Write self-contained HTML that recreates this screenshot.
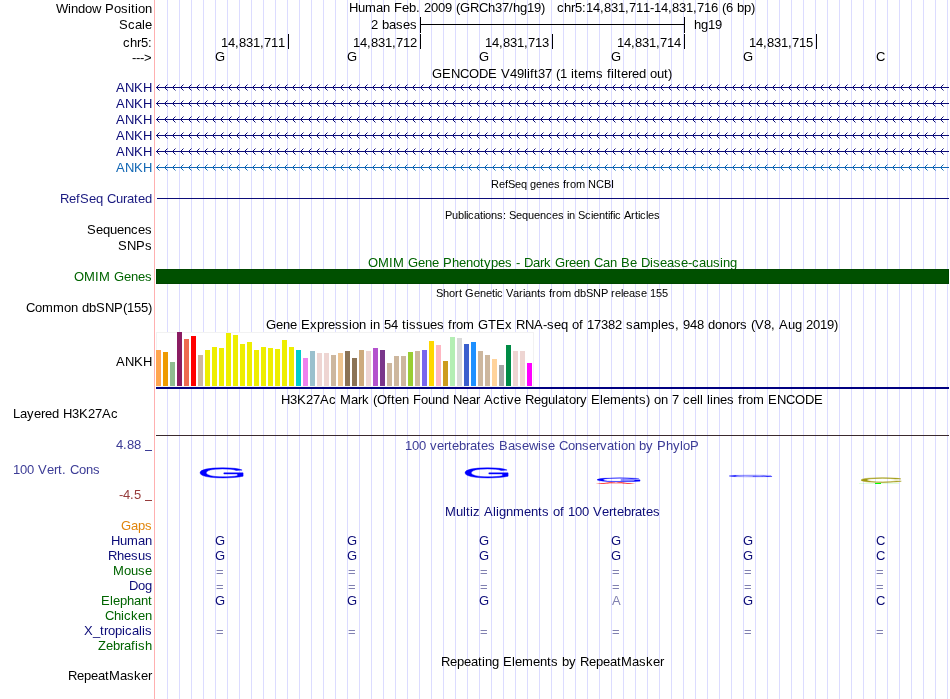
<!DOCTYPE html>
<html><head><meta charset="utf-8"><style>
html,body{margin:0;padding:0;background:#fff;width:950px;height:699px;overflow:hidden}
svg{display:block;will-change:transform}
text{font-family:"Liberation Sans", sans-serif;font-size:13px;white-space:pre}
.s{font-size:11px}
</style></head><body>
<svg width="950" height="699" viewBox="0 0 950 699">
<rect width="950" height="699" fill="#fff"/>

<g fill="#dcdcff" shape-rendering="crispEdges">
<rect x="167" y="0" width="1" height="699"/>
<rect x="179" y="0" width="1" height="699"/>
<rect x="191" y="0" width="1" height="699"/>
<rect x="203" y="0" width="1" height="699"/>
<rect x="215" y="0" width="1" height="699"/>
<rect x="227" y="0" width="1" height="699"/>
<rect x="239" y="0" width="1" height="699"/>
<rect x="251" y="0" width="1" height="699"/>
<rect x="263" y="0" width="1" height="699"/>
<rect x="275" y="0" width="1" height="699"/>
<rect x="287" y="0" width="1" height="699"/>
<rect x="299" y="0" width="1" height="699"/>
<rect x="311" y="0" width="1" height="699"/>
<rect x="323" y="0" width="1" height="699"/>
<rect x="335" y="0" width="1" height="699"/>
<rect x="347" y="0" width="1" height="699"/>
<rect x="359" y="0" width="1" height="699"/>
<rect x="371" y="0" width="1" height="699"/>
<rect x="383" y="0" width="1" height="699"/>
<rect x="395" y="0" width="1" height="699"/>
<rect x="407" y="0" width="1" height="699"/>
<rect x="419" y="0" width="1" height="699"/>
<rect x="431" y="0" width="1" height="699"/>
<rect x="443" y="0" width="1" height="699"/>
<rect x="455" y="0" width="1" height="699"/>
<rect x="467" y="0" width="1" height="699"/>
<rect x="479" y="0" width="1" height="699"/>
<rect x="491" y="0" width="1" height="699"/>
<rect x="503" y="0" width="1" height="699"/>
<rect x="515" y="0" width="1" height="699"/>
<rect x="527" y="0" width="1" height="699"/>
<rect x="539" y="0" width="1" height="699"/>
<rect x="551" y="0" width="1" height="699"/>
<rect x="563" y="0" width="1" height="699"/>
<rect x="575" y="0" width="1" height="699"/>
<rect x="587" y="0" width="1" height="699"/>
<rect x="599" y="0" width="1" height="699"/>
<rect x="611" y="0" width="1" height="699"/>
<rect x="623" y="0" width="1" height="699"/>
<rect x="635" y="0" width="1" height="699"/>
<rect x="647" y="0" width="1" height="699"/>
<rect x="659" y="0" width="1" height="699"/>
<rect x="671" y="0" width="1" height="699"/>
<rect x="683" y="0" width="1" height="699"/>
<rect x="695" y="0" width="1" height="699"/>
<rect x="707" y="0" width="1" height="699"/>
<rect x="719" y="0" width="1" height="699"/>
<rect x="731" y="0" width="1" height="699"/>
<rect x="743" y="0" width="1" height="699"/>
<rect x="755" y="0" width="1" height="699"/>
<rect x="767" y="0" width="1" height="699"/>
<rect x="779" y="0" width="1" height="699"/>
<rect x="791" y="0" width="1" height="699"/>
<rect x="803" y="0" width="1" height="699"/>
<rect x="815" y="0" width="1" height="699"/>
<rect x="827" y="0" width="1" height="699"/>
<rect x="839" y="0" width="1" height="699"/>
<rect x="851" y="0" width="1" height="699"/>
<rect x="863" y="0" width="1" height="699"/>
<rect x="875" y="0" width="1" height="699"/>
<rect x="887" y="0" width="1" height="699"/>
<rect x="899" y="0" width="1" height="699"/>
<rect x="911" y="0" width="1" height="699"/>
<rect x="923" y="0" width="1" height="699"/>
<rect x="935" y="0" width="1" height="699"/>
<rect x="947" y="0" width="1" height="699"/>
</g>
<rect x="154" y="0" width="1" height="699" fill="#ffb0b0" shape-rendering="crispEdges"/>
<text x="56 68 71 78 85 92 101 105 114 121 128 131 135 138 145" y="13" fill="#000">Window Position</text>
<text x="119 128 135 142 145" y="29" fill="#000">Scale</text>
<text x="123 130 137 141 148" y="47" fill="#000">chr5:</text>
<text x="132 136 140 144" y="62" fill="#000">---&gt;</text>
<text x="349 358 365 376 383 390 394 402 409 416 420 424 431 438 445 452 456 460 470 479 488 495 502 509 513 520 527 534 541" y="12" fill="#000">Human Feb. 2009 (GRCh37/hg19)</text>
<text x="557 564 571 575 582 586 593 600 604 611 618 625 629 636 643 650 654 661 668 672 679 686 693 697 704 711 718 722 726 733 737 744 751" y="12" fill="#000">chr5:14,831,711-14,831,716 (6 bp)</text>
<text x="371 378 382 389 396 403 410" y="29" fill="#000">2 bases</text>
<text x="694 701 708 715" y="29" fill="#000">hg19</text>
<g fill="#000" shape-rendering="crispEdges">
<rect x="420" y="17" width="1" height="16"/><rect x="684" y="17" width="1" height="16"/><rect x="420" y="24" width="265" height="1"/>
<rect x="288" y="34" width="1" height="15"/>
<rect x="420" y="34" width="1" height="15"/>
<rect x="552" y="34" width="1" height="15"/>
<rect x="684" y="34" width="1" height="15"/>
<rect x="816" y="34" width="1" height="15"/>
</g>
<text x="221 228 235 239 246 253 260 264 271 278" y="47" fill="#000">14,831,711</text>
<text x="353 360 367 371 378 385 392 396 403 410" y="47" fill="#000">14,831,712</text>
<text x="485 492 499 503 510 517 524 528 535 542" y="47" fill="#000">14,831,713</text>
<text x="617 624 631 635 642 649 656 660 667 674" y="47" fill="#000">14,831,714</text>
<text x="749 756 763 767 774 781 788 792 799 806" y="47" fill="#000">14,831,715</text>
<text x="215" y="61" fill="#000">G</text>
<text x="347" y="61" fill="#000">G</text>
<text x="479" y="61" fill="#000">G</text>
<text x="611" y="61" fill="#000">G</text>
<text x="743" y="61" fill="#000">G</text>
<text x="876" y="61" fill="#000">C</text>
<text x="432 442 451 460 469 479 488 497 501 510 517 524 527 530 534 538 545 552 556 560 567 571 574 578 585 596 603 607 611 614 617 621 628 632 639 646 650 657 664 668" y="78" fill="#000">GENCODE V49lift37 (1 items filtered out)</text>
<text x="116 125 134 143" y="92" fill="#0c0c78">ANKH</text>
<rect x="156" y="87" width="793" height="1" fill="#0c0c78" shape-rendering="crispEdges"/>
<path d="M159.5,84.5L156.5,87.5L159.5,90.5M167.5,84.5L164.5,87.5L167.5,90.5M175.5,84.5L172.5,87.5L175.5,90.5M183.5,84.5L180.5,87.5L183.5,90.5M191.5,84.5L188.5,87.5L191.5,90.5M199.5,84.5L196.5,87.5L199.5,90.5M207.5,84.5L204.5,87.5L207.5,90.5M215.5,84.5L212.5,87.5L215.5,90.5M223.5,84.5L220.5,87.5L223.5,90.5M231.5,84.5L228.5,87.5L231.5,90.5M239.5,84.5L236.5,87.5L239.5,90.5M247.5,84.5L244.5,87.5L247.5,90.5M255.5,84.5L252.5,87.5L255.5,90.5M263.5,84.5L260.5,87.5L263.5,90.5M271.5,84.5L268.5,87.5L271.5,90.5M279.5,84.5L276.5,87.5L279.5,90.5M287.5,84.5L284.5,87.5L287.5,90.5M295.5,84.5L292.5,87.5L295.5,90.5M303.5,84.5L300.5,87.5L303.5,90.5M311.5,84.5L308.5,87.5L311.5,90.5M319.5,84.5L316.5,87.5L319.5,90.5M327.5,84.5L324.5,87.5L327.5,90.5M335.5,84.5L332.5,87.5L335.5,90.5M343.5,84.5L340.5,87.5L343.5,90.5M351.5,84.5L348.5,87.5L351.5,90.5M359.5,84.5L356.5,87.5L359.5,90.5M367.5,84.5L364.5,87.5L367.5,90.5M375.5,84.5L372.5,87.5L375.5,90.5M383.5,84.5L380.5,87.5L383.5,90.5M391.5,84.5L388.5,87.5L391.5,90.5M399.5,84.5L396.5,87.5L399.5,90.5M407.5,84.5L404.5,87.5L407.5,90.5M415.5,84.5L412.5,87.5L415.5,90.5M423.5,84.5L420.5,87.5L423.5,90.5M431.5,84.5L428.5,87.5L431.5,90.5M439.5,84.5L436.5,87.5L439.5,90.5M447.5,84.5L444.5,87.5L447.5,90.5M455.5,84.5L452.5,87.5L455.5,90.5M463.5,84.5L460.5,87.5L463.5,90.5M471.5,84.5L468.5,87.5L471.5,90.5M479.5,84.5L476.5,87.5L479.5,90.5M487.5,84.5L484.5,87.5L487.5,90.5M495.5,84.5L492.5,87.5L495.5,90.5M503.5,84.5L500.5,87.5L503.5,90.5M511.5,84.5L508.5,87.5L511.5,90.5M519.5,84.5L516.5,87.5L519.5,90.5M527.5,84.5L524.5,87.5L527.5,90.5M535.5,84.5L532.5,87.5L535.5,90.5M543.5,84.5L540.5,87.5L543.5,90.5M551.5,84.5L548.5,87.5L551.5,90.5M559.5,84.5L556.5,87.5L559.5,90.5M567.5,84.5L564.5,87.5L567.5,90.5M575.5,84.5L572.5,87.5L575.5,90.5M583.5,84.5L580.5,87.5L583.5,90.5M591.5,84.5L588.5,87.5L591.5,90.5M599.5,84.5L596.5,87.5L599.5,90.5M607.5,84.5L604.5,87.5L607.5,90.5M615.5,84.5L612.5,87.5L615.5,90.5M623.5,84.5L620.5,87.5L623.5,90.5M631.5,84.5L628.5,87.5L631.5,90.5M639.5,84.5L636.5,87.5L639.5,90.5M647.5,84.5L644.5,87.5L647.5,90.5M655.5,84.5L652.5,87.5L655.5,90.5M663.5,84.5L660.5,87.5L663.5,90.5M671.5,84.5L668.5,87.5L671.5,90.5M679.5,84.5L676.5,87.5L679.5,90.5M687.5,84.5L684.5,87.5L687.5,90.5M695.5,84.5L692.5,87.5L695.5,90.5M703.5,84.5L700.5,87.5L703.5,90.5M711.5,84.5L708.5,87.5L711.5,90.5M719.5,84.5L716.5,87.5L719.5,90.5M727.5,84.5L724.5,87.5L727.5,90.5M735.5,84.5L732.5,87.5L735.5,90.5M743.5,84.5L740.5,87.5L743.5,90.5M751.5,84.5L748.5,87.5L751.5,90.5M759.5,84.5L756.5,87.5L759.5,90.5M767.5,84.5L764.5,87.5L767.5,90.5M775.5,84.5L772.5,87.5L775.5,90.5M783.5,84.5L780.5,87.5L783.5,90.5M791.5,84.5L788.5,87.5L791.5,90.5M799.5,84.5L796.5,87.5L799.5,90.5M807.5,84.5L804.5,87.5L807.5,90.5M815.5,84.5L812.5,87.5L815.5,90.5M823.5,84.5L820.5,87.5L823.5,90.5M831.5,84.5L828.5,87.5L831.5,90.5M839.5,84.5L836.5,87.5L839.5,90.5M847.5,84.5L844.5,87.5L847.5,90.5M855.5,84.5L852.5,87.5L855.5,90.5M863.5,84.5L860.5,87.5L863.5,90.5M871.5,84.5L868.5,87.5L871.5,90.5M879.5,84.5L876.5,87.5L879.5,90.5M887.5,84.5L884.5,87.5L887.5,90.5M895.5,84.5L892.5,87.5L895.5,90.5M903.5,84.5L900.5,87.5L903.5,90.5M911.5,84.5L908.5,87.5L911.5,90.5M919.5,84.5L916.5,87.5L919.5,90.5M927.5,84.5L924.5,87.5L927.5,90.5M935.5,84.5L932.5,87.5L935.5,90.5M943.5,84.5L940.5,87.5L943.5,90.5" stroke="#0c0c78" stroke-width="1" fill="none"/>
<text x="116 125 134 143" y="108" fill="#0c0c78">ANKH</text>
<rect x="156" y="103" width="793" height="1" fill="#0c0c78" shape-rendering="crispEdges"/>
<path d="M159.5,100.5L156.5,103.5L159.5,106.5M167.5,100.5L164.5,103.5L167.5,106.5M175.5,100.5L172.5,103.5L175.5,106.5M183.5,100.5L180.5,103.5L183.5,106.5M191.5,100.5L188.5,103.5L191.5,106.5M199.5,100.5L196.5,103.5L199.5,106.5M207.5,100.5L204.5,103.5L207.5,106.5M215.5,100.5L212.5,103.5L215.5,106.5M223.5,100.5L220.5,103.5L223.5,106.5M231.5,100.5L228.5,103.5L231.5,106.5M239.5,100.5L236.5,103.5L239.5,106.5M247.5,100.5L244.5,103.5L247.5,106.5M255.5,100.5L252.5,103.5L255.5,106.5M263.5,100.5L260.5,103.5L263.5,106.5M271.5,100.5L268.5,103.5L271.5,106.5M279.5,100.5L276.5,103.5L279.5,106.5M287.5,100.5L284.5,103.5L287.5,106.5M295.5,100.5L292.5,103.5L295.5,106.5M303.5,100.5L300.5,103.5L303.5,106.5M311.5,100.5L308.5,103.5L311.5,106.5M319.5,100.5L316.5,103.5L319.5,106.5M327.5,100.5L324.5,103.5L327.5,106.5M335.5,100.5L332.5,103.5L335.5,106.5M343.5,100.5L340.5,103.5L343.5,106.5M351.5,100.5L348.5,103.5L351.5,106.5M359.5,100.5L356.5,103.5L359.5,106.5M367.5,100.5L364.5,103.5L367.5,106.5M375.5,100.5L372.5,103.5L375.5,106.5M383.5,100.5L380.5,103.5L383.5,106.5M391.5,100.5L388.5,103.5L391.5,106.5M399.5,100.5L396.5,103.5L399.5,106.5M407.5,100.5L404.5,103.5L407.5,106.5M415.5,100.5L412.5,103.5L415.5,106.5M423.5,100.5L420.5,103.5L423.5,106.5M431.5,100.5L428.5,103.5L431.5,106.5M439.5,100.5L436.5,103.5L439.5,106.5M447.5,100.5L444.5,103.5L447.5,106.5M455.5,100.5L452.5,103.5L455.5,106.5M463.5,100.5L460.5,103.5L463.5,106.5M471.5,100.5L468.5,103.5L471.5,106.5M479.5,100.5L476.5,103.5L479.5,106.5M487.5,100.5L484.5,103.5L487.5,106.5M495.5,100.5L492.5,103.5L495.5,106.5M503.5,100.5L500.5,103.5L503.5,106.5M511.5,100.5L508.5,103.5L511.5,106.5M519.5,100.5L516.5,103.5L519.5,106.5M527.5,100.5L524.5,103.5L527.5,106.5M535.5,100.5L532.5,103.5L535.5,106.5M543.5,100.5L540.5,103.5L543.5,106.5M551.5,100.5L548.5,103.5L551.5,106.5M559.5,100.5L556.5,103.5L559.5,106.5M567.5,100.5L564.5,103.5L567.5,106.5M575.5,100.5L572.5,103.5L575.5,106.5M583.5,100.5L580.5,103.5L583.5,106.5M591.5,100.5L588.5,103.5L591.5,106.5M599.5,100.5L596.5,103.5L599.5,106.5M607.5,100.5L604.5,103.5L607.5,106.5M615.5,100.5L612.5,103.5L615.5,106.5M623.5,100.5L620.5,103.5L623.5,106.5M631.5,100.5L628.5,103.5L631.5,106.5M639.5,100.5L636.5,103.5L639.5,106.5M647.5,100.5L644.5,103.5L647.5,106.5M655.5,100.5L652.5,103.5L655.5,106.5M663.5,100.5L660.5,103.5L663.5,106.5M671.5,100.5L668.5,103.5L671.5,106.5M679.5,100.5L676.5,103.5L679.5,106.5M687.5,100.5L684.5,103.5L687.5,106.5M695.5,100.5L692.5,103.5L695.5,106.5M703.5,100.5L700.5,103.5L703.5,106.5M711.5,100.5L708.5,103.5L711.5,106.5M719.5,100.5L716.5,103.5L719.5,106.5M727.5,100.5L724.5,103.5L727.5,106.5M735.5,100.5L732.5,103.5L735.5,106.5M743.5,100.5L740.5,103.5L743.5,106.5M751.5,100.5L748.5,103.5L751.5,106.5M759.5,100.5L756.5,103.5L759.5,106.5M767.5,100.5L764.5,103.5L767.5,106.5M775.5,100.5L772.5,103.5L775.5,106.5M783.5,100.5L780.5,103.5L783.5,106.5M791.5,100.5L788.5,103.5L791.5,106.5M799.5,100.5L796.5,103.5L799.5,106.5M807.5,100.5L804.5,103.5L807.5,106.5M815.5,100.5L812.5,103.5L815.5,106.5M823.5,100.5L820.5,103.5L823.5,106.5M831.5,100.5L828.5,103.5L831.5,106.5M839.5,100.5L836.5,103.5L839.5,106.5M847.5,100.5L844.5,103.5L847.5,106.5M855.5,100.5L852.5,103.5L855.5,106.5M863.5,100.5L860.5,103.5L863.5,106.5M871.5,100.5L868.5,103.5L871.5,106.5M879.5,100.5L876.5,103.5L879.5,106.5M887.5,100.5L884.5,103.5L887.5,106.5M895.5,100.5L892.5,103.5L895.5,106.5M903.5,100.5L900.5,103.5L903.5,106.5M911.5,100.5L908.5,103.5L911.5,106.5M919.5,100.5L916.5,103.5L919.5,106.5M927.5,100.5L924.5,103.5L927.5,106.5M935.5,100.5L932.5,103.5L935.5,106.5M943.5,100.5L940.5,103.5L943.5,106.5" stroke="#0c0c78" stroke-width="1" fill="none"/>
<text x="116 125 134 143" y="124" fill="#0c0c78">ANKH</text>
<rect x="156" y="119" width="793" height="1" fill="#0c0c78" shape-rendering="crispEdges"/>
<path d="M159.5,116.5L156.5,119.5L159.5,122.5M167.5,116.5L164.5,119.5L167.5,122.5M175.5,116.5L172.5,119.5L175.5,122.5M183.5,116.5L180.5,119.5L183.5,122.5M191.5,116.5L188.5,119.5L191.5,122.5M199.5,116.5L196.5,119.5L199.5,122.5M207.5,116.5L204.5,119.5L207.5,122.5M215.5,116.5L212.5,119.5L215.5,122.5M223.5,116.5L220.5,119.5L223.5,122.5M231.5,116.5L228.5,119.5L231.5,122.5M239.5,116.5L236.5,119.5L239.5,122.5M247.5,116.5L244.5,119.5L247.5,122.5M255.5,116.5L252.5,119.5L255.5,122.5M263.5,116.5L260.5,119.5L263.5,122.5M271.5,116.5L268.5,119.5L271.5,122.5M279.5,116.5L276.5,119.5L279.5,122.5M287.5,116.5L284.5,119.5L287.5,122.5M295.5,116.5L292.5,119.5L295.5,122.5M303.5,116.5L300.5,119.5L303.5,122.5M311.5,116.5L308.5,119.5L311.5,122.5M319.5,116.5L316.5,119.5L319.5,122.5M327.5,116.5L324.5,119.5L327.5,122.5M335.5,116.5L332.5,119.5L335.5,122.5M343.5,116.5L340.5,119.5L343.5,122.5M351.5,116.5L348.5,119.5L351.5,122.5M359.5,116.5L356.5,119.5L359.5,122.5M367.5,116.5L364.5,119.5L367.5,122.5M375.5,116.5L372.5,119.5L375.5,122.5M383.5,116.5L380.5,119.5L383.5,122.5M391.5,116.5L388.5,119.5L391.5,122.5M399.5,116.5L396.5,119.5L399.5,122.5M407.5,116.5L404.5,119.5L407.5,122.5M415.5,116.5L412.5,119.5L415.5,122.5M423.5,116.5L420.5,119.5L423.5,122.5M431.5,116.5L428.5,119.5L431.5,122.5M439.5,116.5L436.5,119.5L439.5,122.5M447.5,116.5L444.5,119.5L447.5,122.5M455.5,116.5L452.5,119.5L455.5,122.5M463.5,116.5L460.5,119.5L463.5,122.5M471.5,116.5L468.5,119.5L471.5,122.5M479.5,116.5L476.5,119.5L479.5,122.5M487.5,116.5L484.5,119.5L487.5,122.5M495.5,116.5L492.5,119.5L495.5,122.5M503.5,116.5L500.5,119.5L503.5,122.5M511.5,116.5L508.5,119.5L511.5,122.5M519.5,116.5L516.5,119.5L519.5,122.5M527.5,116.5L524.5,119.5L527.5,122.5M535.5,116.5L532.5,119.5L535.5,122.5M543.5,116.5L540.5,119.5L543.5,122.5M551.5,116.5L548.5,119.5L551.5,122.5M559.5,116.5L556.5,119.5L559.5,122.5M567.5,116.5L564.5,119.5L567.5,122.5M575.5,116.5L572.5,119.5L575.5,122.5M583.5,116.5L580.5,119.5L583.5,122.5M591.5,116.5L588.5,119.5L591.5,122.5M599.5,116.5L596.5,119.5L599.5,122.5M607.5,116.5L604.5,119.5L607.5,122.5M615.5,116.5L612.5,119.5L615.5,122.5M623.5,116.5L620.5,119.5L623.5,122.5M631.5,116.5L628.5,119.5L631.5,122.5M639.5,116.5L636.5,119.5L639.5,122.5M647.5,116.5L644.5,119.5L647.5,122.5M655.5,116.5L652.5,119.5L655.5,122.5M663.5,116.5L660.5,119.5L663.5,122.5M671.5,116.5L668.5,119.5L671.5,122.5M679.5,116.5L676.5,119.5L679.5,122.5M687.5,116.5L684.5,119.5L687.5,122.5M695.5,116.5L692.5,119.5L695.5,122.5M703.5,116.5L700.5,119.5L703.5,122.5M711.5,116.5L708.5,119.5L711.5,122.5M719.5,116.5L716.5,119.5L719.5,122.5M727.5,116.5L724.5,119.5L727.5,122.5M735.5,116.5L732.5,119.5L735.5,122.5M743.5,116.5L740.5,119.5L743.5,122.5M751.5,116.5L748.5,119.5L751.5,122.5M759.5,116.5L756.5,119.5L759.5,122.5M767.5,116.5L764.5,119.5L767.5,122.5M775.5,116.5L772.5,119.5L775.5,122.5M783.5,116.5L780.5,119.5L783.5,122.5M791.5,116.5L788.5,119.5L791.5,122.5M799.5,116.5L796.5,119.5L799.5,122.5M807.5,116.5L804.5,119.5L807.5,122.5M815.5,116.5L812.5,119.5L815.5,122.5M823.5,116.5L820.5,119.5L823.5,122.5M831.5,116.5L828.5,119.5L831.5,122.5M839.5,116.5L836.5,119.5L839.5,122.5M847.5,116.5L844.5,119.5L847.5,122.5M855.5,116.5L852.5,119.5L855.5,122.5M863.5,116.5L860.5,119.5L863.5,122.5M871.5,116.5L868.5,119.5L871.5,122.5M879.5,116.5L876.5,119.5L879.5,122.5M887.5,116.5L884.5,119.5L887.5,122.5M895.5,116.5L892.5,119.5L895.5,122.5M903.5,116.5L900.5,119.5L903.5,122.5M911.5,116.5L908.5,119.5L911.5,122.5M919.5,116.5L916.5,119.5L919.5,122.5M927.5,116.5L924.5,119.5L927.5,122.5M935.5,116.5L932.5,119.5L935.5,122.5M943.5,116.5L940.5,119.5L943.5,122.5" stroke="#0c0c78" stroke-width="1" fill="none"/>
<text x="116 125 134 143" y="140" fill="#0c0c78">ANKH</text>
<rect x="156" y="135" width="793" height="1" fill="#0c0c78" shape-rendering="crispEdges"/>
<path d="M159.5,132.5L156.5,135.5L159.5,138.5M167.5,132.5L164.5,135.5L167.5,138.5M175.5,132.5L172.5,135.5L175.5,138.5M183.5,132.5L180.5,135.5L183.5,138.5M191.5,132.5L188.5,135.5L191.5,138.5M199.5,132.5L196.5,135.5L199.5,138.5M207.5,132.5L204.5,135.5L207.5,138.5M215.5,132.5L212.5,135.5L215.5,138.5M223.5,132.5L220.5,135.5L223.5,138.5M231.5,132.5L228.5,135.5L231.5,138.5M239.5,132.5L236.5,135.5L239.5,138.5M247.5,132.5L244.5,135.5L247.5,138.5M255.5,132.5L252.5,135.5L255.5,138.5M263.5,132.5L260.5,135.5L263.5,138.5M271.5,132.5L268.5,135.5L271.5,138.5M279.5,132.5L276.5,135.5L279.5,138.5M287.5,132.5L284.5,135.5L287.5,138.5M295.5,132.5L292.5,135.5L295.5,138.5M303.5,132.5L300.5,135.5L303.5,138.5M311.5,132.5L308.5,135.5L311.5,138.5M319.5,132.5L316.5,135.5L319.5,138.5M327.5,132.5L324.5,135.5L327.5,138.5M335.5,132.5L332.5,135.5L335.5,138.5M343.5,132.5L340.5,135.5L343.5,138.5M351.5,132.5L348.5,135.5L351.5,138.5M359.5,132.5L356.5,135.5L359.5,138.5M367.5,132.5L364.5,135.5L367.5,138.5M375.5,132.5L372.5,135.5L375.5,138.5M383.5,132.5L380.5,135.5L383.5,138.5M391.5,132.5L388.5,135.5L391.5,138.5M399.5,132.5L396.5,135.5L399.5,138.5M407.5,132.5L404.5,135.5L407.5,138.5M415.5,132.5L412.5,135.5L415.5,138.5M423.5,132.5L420.5,135.5L423.5,138.5M431.5,132.5L428.5,135.5L431.5,138.5M439.5,132.5L436.5,135.5L439.5,138.5M447.5,132.5L444.5,135.5L447.5,138.5M455.5,132.5L452.5,135.5L455.5,138.5M463.5,132.5L460.5,135.5L463.5,138.5M471.5,132.5L468.5,135.5L471.5,138.5M479.5,132.5L476.5,135.5L479.5,138.5M487.5,132.5L484.5,135.5L487.5,138.5M495.5,132.5L492.5,135.5L495.5,138.5M503.5,132.5L500.5,135.5L503.5,138.5M511.5,132.5L508.5,135.5L511.5,138.5M519.5,132.5L516.5,135.5L519.5,138.5M527.5,132.5L524.5,135.5L527.5,138.5M535.5,132.5L532.5,135.5L535.5,138.5M543.5,132.5L540.5,135.5L543.5,138.5M551.5,132.5L548.5,135.5L551.5,138.5M559.5,132.5L556.5,135.5L559.5,138.5M567.5,132.5L564.5,135.5L567.5,138.5M575.5,132.5L572.5,135.5L575.5,138.5M583.5,132.5L580.5,135.5L583.5,138.5M591.5,132.5L588.5,135.5L591.5,138.5M599.5,132.5L596.5,135.5L599.5,138.5M607.5,132.5L604.5,135.5L607.5,138.5M615.5,132.5L612.5,135.5L615.5,138.5M623.5,132.5L620.5,135.5L623.5,138.5M631.5,132.5L628.5,135.5L631.5,138.5M639.5,132.5L636.5,135.5L639.5,138.5M647.5,132.5L644.5,135.5L647.5,138.5M655.5,132.5L652.5,135.5L655.5,138.5M663.5,132.5L660.5,135.5L663.5,138.5M671.5,132.5L668.5,135.5L671.5,138.5M679.5,132.5L676.5,135.5L679.5,138.5M687.5,132.5L684.5,135.5L687.5,138.5M695.5,132.5L692.5,135.5L695.5,138.5M703.5,132.5L700.5,135.5L703.5,138.5M711.5,132.5L708.5,135.5L711.5,138.5M719.5,132.5L716.5,135.5L719.5,138.5M727.5,132.5L724.5,135.5L727.5,138.5M735.5,132.5L732.5,135.5L735.5,138.5M743.5,132.5L740.5,135.5L743.5,138.5M751.5,132.5L748.5,135.5L751.5,138.5M759.5,132.5L756.5,135.5L759.5,138.5M767.5,132.5L764.5,135.5L767.5,138.5M775.5,132.5L772.5,135.5L775.5,138.5M783.5,132.5L780.5,135.5L783.5,138.5M791.5,132.5L788.5,135.5L791.5,138.5M799.5,132.5L796.5,135.5L799.5,138.5M807.5,132.5L804.5,135.5L807.5,138.5M815.5,132.5L812.5,135.5L815.5,138.5M823.5,132.5L820.5,135.5L823.5,138.5M831.5,132.5L828.5,135.5L831.5,138.5M839.5,132.5L836.5,135.5L839.5,138.5M847.5,132.5L844.5,135.5L847.5,138.5M855.5,132.5L852.5,135.5L855.5,138.5M863.5,132.5L860.5,135.5L863.5,138.5M871.5,132.5L868.5,135.5L871.5,138.5M879.5,132.5L876.5,135.5L879.5,138.5M887.5,132.5L884.5,135.5L887.5,138.5M895.5,132.5L892.5,135.5L895.5,138.5M903.5,132.5L900.5,135.5L903.5,138.5M911.5,132.5L908.5,135.5L911.5,138.5M919.5,132.5L916.5,135.5L919.5,138.5M927.5,132.5L924.5,135.5L927.5,138.5M935.5,132.5L932.5,135.5L935.5,138.5M943.5,132.5L940.5,135.5L943.5,138.5" stroke="#0c0c78" stroke-width="1" fill="none"/>
<text x="116 125 134 143" y="156" fill="#0c0c78">ANKH</text>
<rect x="156" y="151" width="793" height="1" fill="#0c0c78" shape-rendering="crispEdges"/>
<path d="M159.5,148.5L156.5,151.5L159.5,154.5M167.5,148.5L164.5,151.5L167.5,154.5M175.5,148.5L172.5,151.5L175.5,154.5M183.5,148.5L180.5,151.5L183.5,154.5M191.5,148.5L188.5,151.5L191.5,154.5M199.5,148.5L196.5,151.5L199.5,154.5M207.5,148.5L204.5,151.5L207.5,154.5M215.5,148.5L212.5,151.5L215.5,154.5M223.5,148.5L220.5,151.5L223.5,154.5M231.5,148.5L228.5,151.5L231.5,154.5M239.5,148.5L236.5,151.5L239.5,154.5M247.5,148.5L244.5,151.5L247.5,154.5M255.5,148.5L252.5,151.5L255.5,154.5M263.5,148.5L260.5,151.5L263.5,154.5M271.5,148.5L268.5,151.5L271.5,154.5M279.5,148.5L276.5,151.5L279.5,154.5M287.5,148.5L284.5,151.5L287.5,154.5M295.5,148.5L292.5,151.5L295.5,154.5M303.5,148.5L300.5,151.5L303.5,154.5M311.5,148.5L308.5,151.5L311.5,154.5M319.5,148.5L316.5,151.5L319.5,154.5M327.5,148.5L324.5,151.5L327.5,154.5M335.5,148.5L332.5,151.5L335.5,154.5M343.5,148.5L340.5,151.5L343.5,154.5M351.5,148.5L348.5,151.5L351.5,154.5M359.5,148.5L356.5,151.5L359.5,154.5M367.5,148.5L364.5,151.5L367.5,154.5M375.5,148.5L372.5,151.5L375.5,154.5M383.5,148.5L380.5,151.5L383.5,154.5M391.5,148.5L388.5,151.5L391.5,154.5M399.5,148.5L396.5,151.5L399.5,154.5M407.5,148.5L404.5,151.5L407.5,154.5M415.5,148.5L412.5,151.5L415.5,154.5M423.5,148.5L420.5,151.5L423.5,154.5M431.5,148.5L428.5,151.5L431.5,154.5M439.5,148.5L436.5,151.5L439.5,154.5M447.5,148.5L444.5,151.5L447.5,154.5M455.5,148.5L452.5,151.5L455.5,154.5M463.5,148.5L460.5,151.5L463.5,154.5M471.5,148.5L468.5,151.5L471.5,154.5M479.5,148.5L476.5,151.5L479.5,154.5M487.5,148.5L484.5,151.5L487.5,154.5M495.5,148.5L492.5,151.5L495.5,154.5M503.5,148.5L500.5,151.5L503.5,154.5M511.5,148.5L508.5,151.5L511.5,154.5M519.5,148.5L516.5,151.5L519.5,154.5M527.5,148.5L524.5,151.5L527.5,154.5M535.5,148.5L532.5,151.5L535.5,154.5M543.5,148.5L540.5,151.5L543.5,154.5M551.5,148.5L548.5,151.5L551.5,154.5M559.5,148.5L556.5,151.5L559.5,154.5M567.5,148.5L564.5,151.5L567.5,154.5M575.5,148.5L572.5,151.5L575.5,154.5M583.5,148.5L580.5,151.5L583.5,154.5M591.5,148.5L588.5,151.5L591.5,154.5M599.5,148.5L596.5,151.5L599.5,154.5M607.5,148.5L604.5,151.5L607.5,154.5M615.5,148.5L612.5,151.5L615.5,154.5M623.5,148.5L620.5,151.5L623.5,154.5M631.5,148.5L628.5,151.5L631.5,154.5M639.5,148.5L636.5,151.5L639.5,154.5M647.5,148.5L644.5,151.5L647.5,154.5M655.5,148.5L652.5,151.5L655.5,154.5M663.5,148.5L660.5,151.5L663.5,154.5M671.5,148.5L668.5,151.5L671.5,154.5M679.5,148.5L676.5,151.5L679.5,154.5M687.5,148.5L684.5,151.5L687.5,154.5M695.5,148.5L692.5,151.5L695.5,154.5M703.5,148.5L700.5,151.5L703.5,154.5M711.5,148.5L708.5,151.5L711.5,154.5M719.5,148.5L716.5,151.5L719.5,154.5M727.5,148.5L724.5,151.5L727.5,154.5M735.5,148.5L732.5,151.5L735.5,154.5M743.5,148.5L740.5,151.5L743.5,154.5M751.5,148.5L748.5,151.5L751.5,154.5M759.5,148.5L756.5,151.5L759.5,154.5M767.5,148.5L764.5,151.5L767.5,154.5M775.5,148.5L772.5,151.5L775.5,154.5M783.5,148.5L780.5,151.5L783.5,154.5M791.5,148.5L788.5,151.5L791.5,154.5M799.5,148.5L796.5,151.5L799.5,154.5M807.5,148.5L804.5,151.5L807.5,154.5M815.5,148.5L812.5,151.5L815.5,154.5M823.5,148.5L820.5,151.5L823.5,154.5M831.5,148.5L828.5,151.5L831.5,154.5M839.5,148.5L836.5,151.5L839.5,154.5M847.5,148.5L844.5,151.5L847.5,154.5M855.5,148.5L852.5,151.5L855.5,154.5M863.5,148.5L860.5,151.5L863.5,154.5M871.5,148.5L868.5,151.5L871.5,154.5M879.5,148.5L876.5,151.5L879.5,154.5M887.5,148.5L884.5,151.5L887.5,154.5M895.5,148.5L892.5,151.5L895.5,154.5M903.5,148.5L900.5,151.5L903.5,154.5M911.5,148.5L908.5,151.5L911.5,154.5M919.5,148.5L916.5,151.5L919.5,154.5M927.5,148.5L924.5,151.5L927.5,154.5M935.5,148.5L932.5,151.5L935.5,154.5M943.5,148.5L940.5,151.5L943.5,154.5" stroke="#0c0c78" stroke-width="1" fill="none"/>
<text x="116 125 134 143" y="172" fill="#1066b4">ANKH</text>
<rect x="156" y="167" width="793" height="1" fill="#1066b4" shape-rendering="crispEdges"/>
<path d="M159.5,164.5L156.5,167.5L159.5,170.5M167.5,164.5L164.5,167.5L167.5,170.5M175.5,164.5L172.5,167.5L175.5,170.5M183.5,164.5L180.5,167.5L183.5,170.5M191.5,164.5L188.5,167.5L191.5,170.5M199.5,164.5L196.5,167.5L199.5,170.5M207.5,164.5L204.5,167.5L207.5,170.5M215.5,164.5L212.5,167.5L215.5,170.5M223.5,164.5L220.5,167.5L223.5,170.5M231.5,164.5L228.5,167.5L231.5,170.5M239.5,164.5L236.5,167.5L239.5,170.5M247.5,164.5L244.5,167.5L247.5,170.5M255.5,164.5L252.5,167.5L255.5,170.5M263.5,164.5L260.5,167.5L263.5,170.5M271.5,164.5L268.5,167.5L271.5,170.5M279.5,164.5L276.5,167.5L279.5,170.5M287.5,164.5L284.5,167.5L287.5,170.5M295.5,164.5L292.5,167.5L295.5,170.5M303.5,164.5L300.5,167.5L303.5,170.5M311.5,164.5L308.5,167.5L311.5,170.5M319.5,164.5L316.5,167.5L319.5,170.5M327.5,164.5L324.5,167.5L327.5,170.5M335.5,164.5L332.5,167.5L335.5,170.5M343.5,164.5L340.5,167.5L343.5,170.5M351.5,164.5L348.5,167.5L351.5,170.5M359.5,164.5L356.5,167.5L359.5,170.5M367.5,164.5L364.5,167.5L367.5,170.5M375.5,164.5L372.5,167.5L375.5,170.5M383.5,164.5L380.5,167.5L383.5,170.5M391.5,164.5L388.5,167.5L391.5,170.5M399.5,164.5L396.5,167.5L399.5,170.5M407.5,164.5L404.5,167.5L407.5,170.5M415.5,164.5L412.5,167.5L415.5,170.5M423.5,164.5L420.5,167.5L423.5,170.5M431.5,164.5L428.5,167.5L431.5,170.5M439.5,164.5L436.5,167.5L439.5,170.5M447.5,164.5L444.5,167.5L447.5,170.5M455.5,164.5L452.5,167.5L455.5,170.5M463.5,164.5L460.5,167.5L463.5,170.5M471.5,164.5L468.5,167.5L471.5,170.5M479.5,164.5L476.5,167.5L479.5,170.5M487.5,164.5L484.5,167.5L487.5,170.5M495.5,164.5L492.5,167.5L495.5,170.5M503.5,164.5L500.5,167.5L503.5,170.5M511.5,164.5L508.5,167.5L511.5,170.5M519.5,164.5L516.5,167.5L519.5,170.5M527.5,164.5L524.5,167.5L527.5,170.5M535.5,164.5L532.5,167.5L535.5,170.5M543.5,164.5L540.5,167.5L543.5,170.5M551.5,164.5L548.5,167.5L551.5,170.5M559.5,164.5L556.5,167.5L559.5,170.5M567.5,164.5L564.5,167.5L567.5,170.5M575.5,164.5L572.5,167.5L575.5,170.5M583.5,164.5L580.5,167.5L583.5,170.5M591.5,164.5L588.5,167.5L591.5,170.5M599.5,164.5L596.5,167.5L599.5,170.5M607.5,164.5L604.5,167.5L607.5,170.5M615.5,164.5L612.5,167.5L615.5,170.5M623.5,164.5L620.5,167.5L623.5,170.5M631.5,164.5L628.5,167.5L631.5,170.5M639.5,164.5L636.5,167.5L639.5,170.5M647.5,164.5L644.5,167.5L647.5,170.5M655.5,164.5L652.5,167.5L655.5,170.5M663.5,164.5L660.5,167.5L663.5,170.5M671.5,164.5L668.5,167.5L671.5,170.5M679.5,164.5L676.5,167.5L679.5,170.5M687.5,164.5L684.5,167.5L687.5,170.5M695.5,164.5L692.5,167.5L695.5,170.5M703.5,164.5L700.5,167.5L703.5,170.5M711.5,164.5L708.5,167.5L711.5,170.5M719.5,164.5L716.5,167.5L719.5,170.5M727.5,164.5L724.5,167.5L727.5,170.5M735.5,164.5L732.5,167.5L735.5,170.5M743.5,164.5L740.5,167.5L743.5,170.5M751.5,164.5L748.5,167.5L751.5,170.5M759.5,164.5L756.5,167.5L759.5,170.5M767.5,164.5L764.5,167.5L767.5,170.5M775.5,164.5L772.5,167.5L775.5,170.5M783.5,164.5L780.5,167.5L783.5,170.5M791.5,164.5L788.5,167.5L791.5,170.5M799.5,164.5L796.5,167.5L799.5,170.5M807.5,164.5L804.5,167.5L807.5,170.5M815.5,164.5L812.5,167.5L815.5,170.5M823.5,164.5L820.5,167.5L823.5,170.5M831.5,164.5L828.5,167.5L831.5,170.5M839.5,164.5L836.5,167.5L839.5,170.5M847.5,164.5L844.5,167.5L847.5,170.5M855.5,164.5L852.5,167.5L855.5,170.5M863.5,164.5L860.5,167.5L863.5,170.5M871.5,164.5L868.5,167.5L871.5,170.5M879.5,164.5L876.5,167.5L879.5,170.5M887.5,164.5L884.5,167.5L887.5,170.5M895.5,164.5L892.5,167.5L895.5,170.5M903.5,164.5L900.5,167.5L903.5,170.5M911.5,164.5L908.5,167.5L911.5,170.5M919.5,164.5L916.5,167.5L919.5,170.5M927.5,164.5L924.5,167.5L927.5,170.5M935.5,164.5L932.5,167.5L935.5,170.5M943.5,164.5L940.5,167.5L943.5,170.5" stroke="#1066b4" stroke-width="1" fill="none"/>
<text x="491 499 505 508 515 521 527 530 536 542 548 554 560 563 566 570 576 585 588 596 604 611" y="188" fill="#000" class="s">RefSeq genes from NCBI</text>
<text x="60 69 76 80 89 96 103 107 116 123 127 134 138 145" y="203" fill="#1a1a80">RefSeq Curated</text>
<rect x="157" y="198" width="792" height="1" fill="#0c0c78" shape-rendering="crispEdges"/>
<text x="445 452 458 464 466 468 474 480 483 485 491 497 503 506 509 516 522 528 534 540 546 552 558 564 567 569 575 578 585 591 593 599 605 608 610 613 615 621 624 631 635 638 640 646 648 654" y="219" fill="#000" class="s">Publications: Sequences in Scientific Articles</text>
<text x="87 96 103 110 117 124 131 138 145" y="234" fill="#000">Sequences</text>
<text x="118 127 136 145" y="250" fill="#000">SNPs</text>
<text x="368 378 389 393 404 408 418 425 432 439 443 452 459 466 473 480 484 491 498 505 512 516 520 524 533 540 544 551 555 565 569 576 583 590 594 603 610 617 621 630 637 641 650 653 660 667 674 681 688 692 699 706 713 720 723 730" y="267" fill="#006400">OMIM Gene Phenotypes - Dark Green Can Be Disease-causing</text>
<text x="74 84 95 99 110 114 124 131 138 145" y="281" fill="#006400">OMIM Genes</text>
<rect x="156" y="269" width="793" height="15" fill="#004600" shape-rendering="crispEdges"/><rect x="157" y="270" width="791" height="13" fill="#005000" shape-rendering="crispEdges"/>
<text x="436 443 449 455 459 462 465 474 480 486 492 495 497 503 506 513 519 523 525 531 537 540 546 549 552 556 562 571 574 580 586 593 601 608 611 615 621 623 629 635 641 647 650 656 662" y="297" fill="#000" class="s">Short Genetic Variants from dbSNP release 155</text>
<text x="26 35 42 53 64 71 78 82 89 96 105 114 123 127 134 141 148" y="312" fill="#000">Common dbSNP(155)</text>
<text x="266 276 283 290 297 301 310 317 324 328 335 342 349 352 359 366 370 373 380 384 391 398 402 406 409 416 423 430 437 444 448 452 456 463 474 478 488 496 505 512 516 525 534 543 547 554 561 568 572 579 583 587 594 601 608 615 622 626 633 640 651 658 661 668 675 679 683 690 697 704 708 715 722 729 736 740 747 751 755 764 771 775 779 788 795 802 806 813 820 827 834" y="329" fill="#000">Gene Expression in 54 tissues from GTEx RNA-seq of 17382 samples, 948 donors (V8, Aug 2019)</text>
<text x="116 125 134 143" y="366" fill="#000">ANKH</text>
<rect x="156" y="332" width="378" height="55" fill="#fff" stroke="none" shape-rendering="crispEdges"/>
<g fill="#f2f2f2" shape-rendering="crispEdges"><rect x="156" y="332" width="378" height="1"/><rect x="156" y="386" width="378" height="1"/><rect x="156" y="332" width="1" height="55"/><rect x="533" y="332" width="1" height="55"/></g>
<g shape-rendering="crispEdges">
<rect x="156" y="350" width="5" height="36" fill="#FFA54F"/>
<rect x="163" y="352" width="5" height="34" fill="#EE9A00"/>
<rect x="170" y="362" width="5" height="24" fill="#8FBC8F"/>
<rect x="177" y="332" width="5" height="54" fill="#8B1C62"/>
<rect x="184" y="339" width="5" height="47" fill="#EE6A50"/>
<rect x="191" y="336" width="5" height="50" fill="#FF0000"/>
<rect x="198" y="355" width="5" height="31" fill="#CDB79E"/>
<rect x="205" y="350" width="5" height="36" fill="#EEEE00"/>
<rect x="212" y="347" width="5" height="39" fill="#EEEE00"/>
<rect x="219" y="348" width="5" height="38" fill="#EEEE00"/>
<rect x="226" y="333" width="5" height="53" fill="#EEEE00"/>
<rect x="233" y="335" width="5" height="51" fill="#EEEE00"/>
<rect x="240" y="344" width="5" height="42" fill="#EEEE00"/>
<rect x="247" y="342" width="5" height="44" fill="#EEEE00"/>
<rect x="254" y="350" width="5" height="36" fill="#EEEE00"/>
<rect x="261" y="347" width="5" height="39" fill="#EEEE00"/>
<rect x="268" y="348" width="5" height="38" fill="#EEEE00"/>
<rect x="275" y="349" width="5" height="37" fill="#EEEE00"/>
<rect x="282" y="340" width="5" height="46" fill="#EEEE00"/>
<rect x="289" y="347" width="5" height="39" fill="#EEEE00"/>
<rect x="296" y="350" width="5" height="36" fill="#00CDCD"/>
<rect x="303" y="358" width="5" height="28" fill="#EE82EE"/>
<rect x="310" y="351" width="5" height="35" fill="#9AC0CD"/>
<rect x="317" y="353" width="5" height="33" fill="#EED5D2"/>
<rect x="324" y="353" width="5" height="33" fill="#EED5D2"/>
<rect x="331" y="355" width="5" height="31" fill="#CDB79E"/>
<rect x="338" y="353" width="5" height="33" fill="#EEC591"/>
<rect x="345" y="351" width="5" height="35" fill="#8B7355"/>
<rect x="352" y="358" width="5" height="28" fill="#8B7355"/>
<rect x="359" y="350" width="5" height="36" fill="#CDAA7D"/>
<rect x="366" y="351" width="5" height="35" fill="#EED5D2"/>
<rect x="373" y="348" width="5" height="38" fill="#B452CD"/>
<rect x="380" y="350" width="5" height="36" fill="#7A378B"/>
<rect x="387" y="363" width="5" height="23" fill="#CDB79E"/>
<rect x="394" y="356" width="5" height="30" fill="#CDB79E"/>
<rect x="401" y="356" width="5" height="30" fill="#CDB79E"/>
<rect x="408" y="352" width="5" height="34" fill="#9ACD32"/>
<rect x="415" y="351" width="5" height="35" fill="#CDB79E"/>
<rect x="422" y="350" width="5" height="36" fill="#7A67EE"/>
<rect x="429" y="341" width="5" height="45" fill="#FFD700"/>
<rect x="436" y="345" width="5" height="41" fill="#FFB6C1"/>
<rect x="443" y="361" width="5" height="25" fill="#CD9B1D"/>
<rect x="450" y="337" width="5" height="49" fill="#B4EEB4"/>
<rect x="457" y="338" width="5" height="48" fill="#D9D9D9"/>
<rect x="464" y="344" width="5" height="42" fill="#3A5FCD"/>
<rect x="471" y="342" width="5" height="44" fill="#1E90FF"/>
<rect x="478" y="351" width="5" height="35" fill="#CDB79E"/>
<rect x="485" y="355" width="5" height="31" fill="#CDB79E"/>
<rect x="492" y="359" width="5" height="27" fill="#FFD39B"/>
<rect x="499" y="365" width="5" height="21" fill="#A6A6A6"/>
<rect x="506" y="345" width="5" height="41" fill="#008B45"/>
<rect x="513" y="351" width="5" height="35" fill="#EED5D2"/>
<rect x="520" y="351" width="5" height="35" fill="#EED5D2"/>
<rect x="527" y="363" width="5" height="23" fill="#FF00FF"/>
</g>
<rect x="156" y="387" width="793" height="2" fill="#000080" shape-rendering="crispEdges"/>
<text x="281 290 297 306 313 320 329 336 340 351 358 362 369 373 377 387 391 395 402 409 413 421 428 435 442 449 453 462 469 476 480 484 493 500 504 507 514 521 525 534 541 548 555 558 565 569 576 580 587 591 600 603 610 621 628 635 639 646 650 654 661 668 672 679 683 690 697 700 703 707 710 713 720 727 734 738 742 746 753 764 768 777 786 795 805 814" y="404" fill="#000">H3K27Ac Mark (Often Found Near Active Regulatory Elements) on 7 cell lines from ENCODE</text>
<text x="13 20 27 34 41 45 52 59 63 72 79 88 95 102 111" y="418" fill="#000">Layered H3K27Ac</text>
<rect x="156" y="435" width="793" height="1" fill="#3a2a2e" shape-rendering="crispEdges"/>
<text x="405 412 419 426 430 437 444 448 452 459 466 470 477 481 488 495 499 508 515 522 529 538 541 548 555 559 568 575 582 589 596 600 607 614 618 621 628 635 639 646 653 657 666 673 680 683 690" y="450" fill="#3c3c96">100 vertebrates Basewise Conservation by PhyloP</text>
<text x="116 123 127 134" y="449" fill="#3c3c96">4.88</text>
<rect x="145" y="450" width="7" height="1" fill="#3c3c96"/>
<text x="13 20 27 34 38 47 54 58 62 66 70 79 86 93" y="474" fill="#3c3c96">100 Vert. Cons</text>
<text x="119 123 130 134" y="499" fill="#963c3c">-4.5</text>
<rect x="145" y="500" width="7" height="1" fill="#963c3c"/>
<path transform="translate(196.680,477.761) scale(0.03224,-0.00697)" d="M103 711Q103 1054 287.0 1242.0Q471 1430 804 1430Q1038 1430 1184.0 1351.0Q1330 1272 1409 1098L1227 1044Q1167 1164 1061.5 1219.0Q956 1274 799 1274Q555 1274 426.0 1126.5Q297 979 297 711Q297 444 434.0 289.5Q571 135 813 135Q951 135 1070.5 177.0Q1190 219 1264 291V545H843V705H1440V219Q1328 105 1165.5 42.5Q1003 -20 813 -20Q592 -20 432.0 68.0Q272 156 187.5 321.5Q103 487 103 711Z" fill="#0000ff" fill-opacity="1" stroke="#0000ff" stroke-width="0.45" vector-effect="non-scaling-stroke"/>
<path transform="translate(461.680,477.761) scale(0.03224,-0.00697)" d="M103 711Q103 1054 287.0 1242.0Q471 1430 804 1430Q1038 1430 1184.0 1351.0Q1330 1272 1409 1098L1227 1044Q1167 1164 1061.5 1219.0Q956 1274 799 1274Q555 1274 426.0 1126.5Q297 979 297 711Q297 444 434.0 289.5Q571 135 813 135Q951 135 1070.5 177.0Q1190 219 1264 291V545H843V705H1440V219Q1328 105 1165.5 42.5Q1003 -20 813 -20Q592 -20 432.0 68.0Q272 156 187.5 321.5Q103 487 103 711Z" fill="#0000ff" fill-opacity="1" stroke="#0000ff" stroke-width="0.45" vector-effect="non-scaling-stroke"/>
<path transform="translate(593.680,481.745) scale(0.03224,-0.00276)" d="M103 711Q103 1054 287.0 1242.0Q471 1430 804 1430Q1038 1430 1184.0 1351.0Q1330 1272 1409 1098L1227 1044Q1167 1164 1061.5 1219.0Q956 1274 799 1274Q555 1274 426.0 1126.5Q297 979 297 711Q297 444 434.0 289.5Q571 135 813 135Q951 135 1070.5 177.0Q1190 219 1264 291V545H843V705H1440V219Q1328 105 1165.5 42.5Q1003 -20 813 -20Q592 -20 432.0 68.0Q272 156 187.5 321.5Q103 487 103 711Z" fill="#0000ff" fill-opacity="1" stroke="#0000ff" stroke-width="0.25" vector-effect="non-scaling-stroke"/>
<path transform="translate(595.382,484.000) scale(0.02946,-0.00142)" d="M1167 0 1006 412H364L202 0H4L579 1409H796L1362 0ZM685 1265 676 1237Q651 1154 602 1024L422 561H949L768 1026Q740 1095 712 1182Z" fill="#ff0000" fill-opacity="1" stroke="#ff0000" stroke-width="0" vector-effect="non-scaling-stroke"/>
<path transform="translate(725.687,476.875) scale(0.03216,-0.00124)" d="M103 711Q103 1054 287.0 1242.0Q471 1430 804 1430Q1038 1430 1184.0 1351.0Q1330 1272 1409 1098L1227 1044Q1167 1164 1061.5 1219.0Q956 1274 799 1274Q555 1274 426.0 1126.5Q297 979 297 711Q297 444 434.0 289.5Q571 135 813 135Q951 135 1070.5 177.0Q1190 219 1264 291V545H843V705H1440V219Q1328 105 1165.5 42.5Q1003 -20 813 -20Q592 -20 432.0 68.0Q272 156 187.5 321.5Q103 487 103 711Z" fill="#0000ff" fill-opacity="1" stroke="#0000ff" stroke-width="0.15" vector-effect="non-scaling-stroke"/>
<path transform="translate(857.769,482.337) scale(0.03107,-0.00317)" d="M792 1274Q558 1274 428.0 1123.5Q298 973 298 711Q298 452 433.5 294.5Q569 137 800 137Q1096 137 1245 430L1401 352Q1314 170 1156.5 75.0Q999 -20 791 -20Q578 -20 422.5 68.5Q267 157 185.5 321.5Q104 486 104 711Q104 1048 286.0 1239.0Q468 1430 790 1430Q1015 1430 1166.0 1342.0Q1317 1254 1388 1081L1207 1021Q1158 1144 1049.5 1209.0Q941 1274 792 1274Z" fill="#a09a10" fill-opacity="1" stroke="#a09a10" stroke-width="0.45" vector-effect="non-scaling-stroke"/>
<rect x="859" y="483" width="40" height="1" fill="#00ff00" fill-opacity="0.12"/>
<rect x="875" y="483" width="6" height="1" fill="#00ff00"/>
<text x="445 456 463 466 470 473 480 484 493 496 499 506 513 524 531 538 542 549 553 560 564 568 575 582 589 593 602 609 613 617 624 631 635 642 646 653" y="516" fill="#0c0c78">Multiz Alignments of 100 Vertebrates</text>
<text x="121 131 138 145" y="530" fill="#e0840a">Gaps</text>
<text x="111 120 127 138 145" y="545" fill="#0c0c78">Human</text>
<text x="108 117 124 131 138 145" y="560" fill="#0c0c78">Rhesus</text>
<text x="113 124 131 138 145" y="575" fill="#006400">Mouse</text>
<text x="129 138 145" y="590" fill="#0c0c78">Dog</text>
<text x="101 110 113 120 127 134 141 148" y="605" fill="#006400">Elephant</text>
<text x="105 114 121 124 131 138 145" y="620" fill="#006400">Chicken</text>
<text x="84 93 100 104 108 115 122 125 132 139 142 145" y="635" fill="#0c0c78">X_tropicalis</text>
<text x="98 106 113 120 124 131 135 138 145" y="650" fill="#006400">Zebrafish</text>
<text x="215" y="545" fill="#0c0c78">G</text>
<text x="347" y="545" fill="#0c0c78">G</text>
<text x="479" y="545" fill="#0c0c78">G</text>
<text x="611" y="545" fill="#0c0c78">G</text>
<text x="743" y="545" fill="#0c0c78">G</text>
<text x="876" y="545" fill="#0c0c78">C</text>
<text x="215" y="560" fill="#0c0c78">G</text>
<text x="347" y="560" fill="#0c0c78">G</text>
<text x="479" y="560" fill="#0c0c78">G</text>
<text x="611" y="560" fill="#0c0c78">G</text>
<text x="743" y="560" fill="#0c0c78">G</text>
<text x="876" y="560" fill="#0c0c78">C</text>
<text x="215" y="605" fill="#0c0c78">G</text>
<text x="347" y="605" fill="#0c0c78">G</text>
<text x="479" y="605" fill="#0c0c78">G</text>
<text x="612" y="605" fill="#8080b0">A</text>
<text x="743" y="605" fill="#0c0c78">G</text>
<text x="876" y="605" fill="#0c0c78">C</text>
<text x="216" y="576" fill="#8080b0">=</text>
<text x="348" y="576" fill="#8080b0">=</text>
<text x="480" y="576" fill="#8080b0">=</text>
<text x="612" y="576" fill="#8080b0">=</text>
<text x="744" y="576" fill="#8080b0">=</text>
<text x="876" y="576" fill="#8080b0">=</text>
<text x="216" y="591" fill="#8080b0">=</text>
<text x="348" y="591" fill="#8080b0">=</text>
<text x="480" y="591" fill="#8080b0">=</text>
<text x="612" y="591" fill="#8080b0">=</text>
<text x="744" y="591" fill="#8080b0">=</text>
<text x="876" y="591" fill="#8080b0">=</text>
<text x="216" y="636" fill="#8080b0">=</text>
<text x="348" y="636" fill="#8080b0">=</text>
<text x="480" y="636" fill="#8080b0">=</text>
<text x="612" y="636" fill="#8080b0">=</text>
<text x="744" y="636" fill="#8080b0">=</text>
<text x="876" y="636" fill="#8080b0">=</text>
<text x="441 450 457 464 471 478 482 485 492 499 503 512 515 522 533 540 547 551 558 562 569 576 580 589 596 603 610 617 621 632 639 646 653 660" y="666" fill="#000">Repeating Elements by RepeatMasker</text>
<text x="68 77 84 91 98 105 109 120 127 134 141 148" y="680" fill="#000">RepeatMasker</text>
</svg></body></html>
